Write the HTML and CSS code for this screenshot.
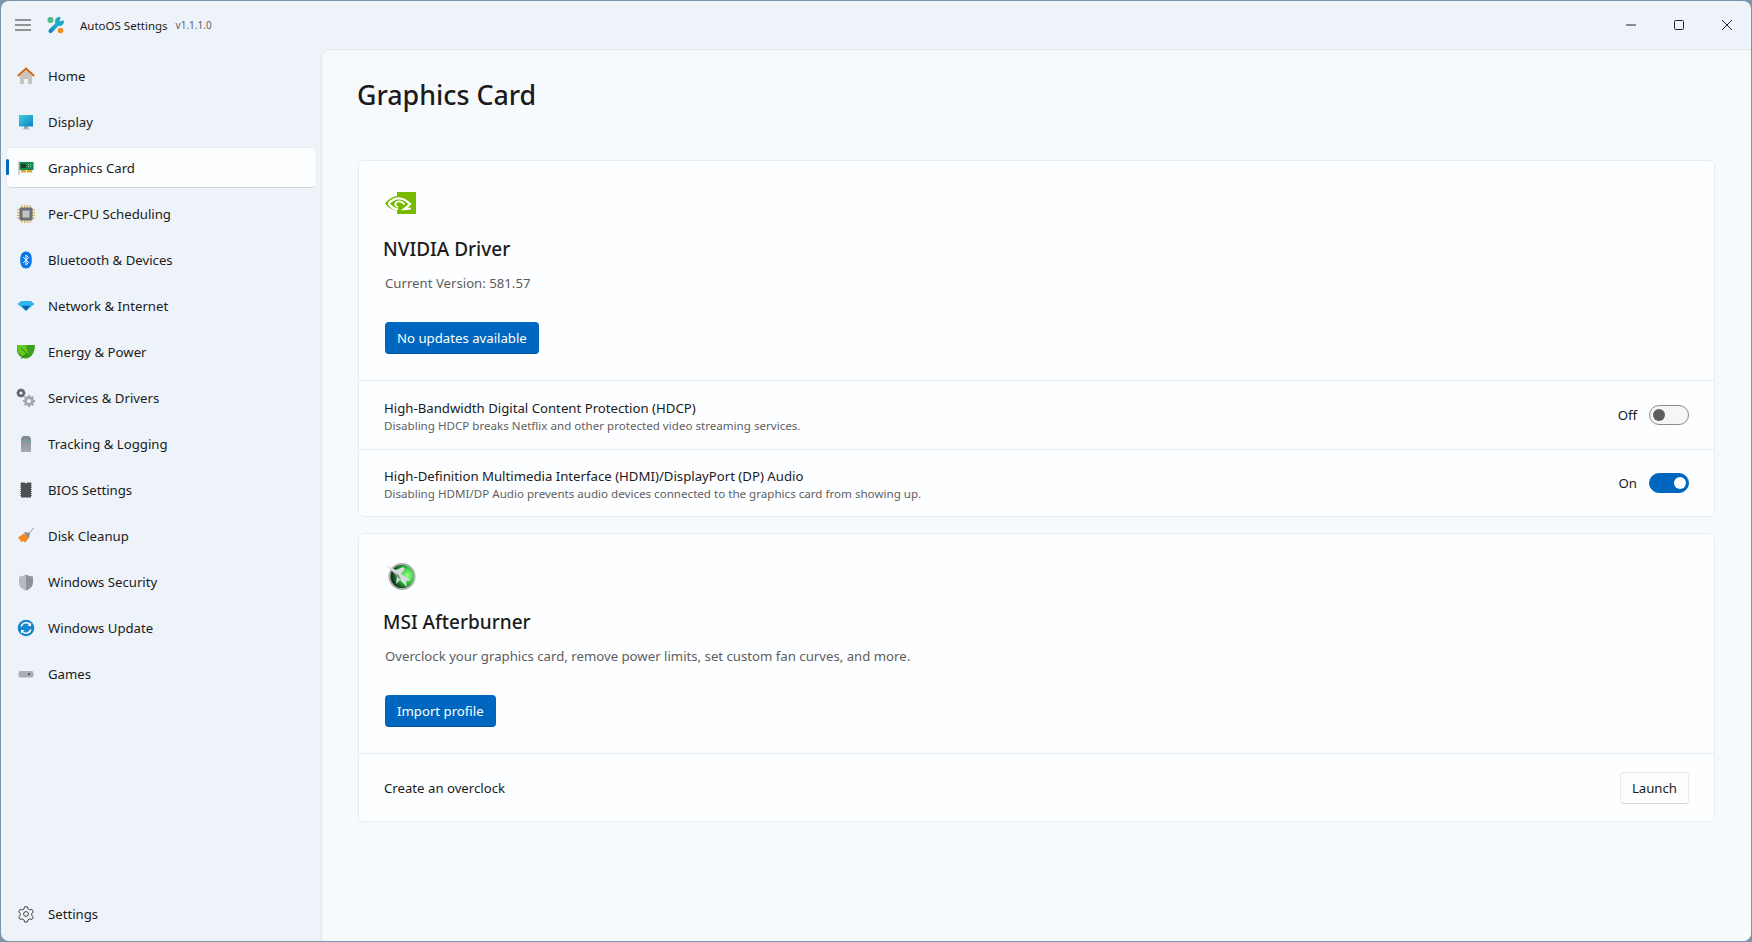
FILE: index.html
```html
<!DOCTYPE html>
<html lang="en">
<head>
    <meta charset="UTF-8">
    <title>AutoOS Settings</title>
    <link rel="stylesheet" href="styles.css">
</head>
<body>
    <div class="window">
        <header class="titlebar">
            <svg class="hamburger" width="16" height="12" viewBox="0 0 16 12"><path d="M0 1h16M0 6h16M0 11h16" stroke="#333" stroke-width="1" fill="none"/></svg>
            <svg class="app-logo" width="18" height="18" viewBox="0 0 18 18">
                <defs><linearGradient id="wrench" x1="0" y1="1" x2="1" y2="0"><stop offset="0" stop-color="#1683c9"/><stop offset="1" stop-color="#27c0c4"/></linearGradient></defs>
                <circle cx="3.500" cy="4" r="3" fill="#4fb98a"/>
                <path d="M3.500 15 11 7.500" stroke="url(#wrench)" stroke-width="4" stroke-linecap="round"/>
                <circle cx="12.500" cy="5.500" r="4.500" fill="#1fa8c6"/>
                <path d="M12.500 5.500 14 0h4v4Z" fill="#eef3f9"/>
                <circle cx="13.500" cy="14.500" r="2.800" fill="#f58a1f"/>
            </svg>
            <span class="app-name">AutoOS Settings</span>
            <span class="app-version">v1.1.1.0</span>
            <div class="caption-buttons">
                <svg width="10" height="10" viewBox="0 0 10 10"><path d="M0 5h10" stroke="#222" stroke-width="1"/></svg>
                <svg width="10" height="10" viewBox="0 0 10 10"><rect x=".5" y=".5" width="9" height="9" rx="1" fill="none" stroke="#222"/></svg>
                <svg width="10" height="10" viewBox="0 0 10 10"><path d="M0 0l10 10M10 0 0 10" stroke="#222" stroke-width="1"/></svg>
            </div>
        </header>
        <div class="main">
            <nav class="sidebar">
                <ul class="nav-list">
                    <li class="nav-item">
                        <svg class="nav-icon" viewBox="0 0 20 20"><path d="M4 9.5 10 4l6 5.500V18h-4v-5H8v5H4Z" fill="#c9c6c2"/><path d="M1.800 10 10 2.500 18.200 10" fill="none" stroke="#d9640f" stroke-width="2"/></svg>
                        Home
                    </li>
                    <li class="nav-item">
                        <svg class="nav-icon" viewBox="0 0 20 20"><defs><linearGradient id="screen" x1="0" y1="0" x2="1" y2="1"><stop offset="0" stop-color="#3fd0e0"/><stop offset="1" stop-color="#0f7fc4"/></linearGradient></defs><rect x="8" y="14" width="4" height="3" fill="#9aa4ad"/><rect x="6.500" y="16.500" width="7" height="1" fill="#b4bcc3"/><rect x="3" y="3" width="14" height="11.500" fill="url(#screen)"/></svg>
                        Display
                    </li>
                    <li class="nav-item selected">
                        <svg class="nav-icon" viewBox="0 0 20 20"><path d="M2.500 3.500h1V17h-1Z" fill="#a5a5a5"/><rect x="3.500" y="4" width="14" height="8" fill="#118a4a"/><rect x="5" y="6" width="5" height="4" fill="#333"/><path d="M12 6h1v1h-1Zm2 0h1v1h-1Zm-2 2h1v1h-1Zm2 0h1v1h-1Z" fill="#9fd8b4"/><rect x="5" y="12" width="5" height="2.500" fill="#e0a81e"/><rect x="11" y="12" width="5" height="2.500" fill="#e0a81e"/></svg>
                        Graphics Card
                    </li>
                    <li class="nav-item">
                        <svg class="nav-icon" viewBox="0 0 20 20"><path d="M6 1v18M8.700 1v18M11.300 1v18M14 1v18M1 6h18M1 8.700h18M1 11.300h18M1 14h18" stroke="#d4a21e" stroke-width="1"/><rect x="3.500" y="3.500" width="13" height="13" rx="1" fill="#6d7074"/><rect x="6.500" y="6.500" width="7" height="7" fill="#c2c3c4"/></svg>
                        Per-CPU Scheduling
                    </li>
                    <li class="nav-item">
                        <svg class="nav-icon" viewBox="0 0 20 20"><path d="M10 1.500c4 0 5.800 3 5.800 8.500S14 18.500 10 18.500 4.200 15.500 4.200 10 6 1.500 10 1.500Z" fill="#0a78ea"/><path d="M7.300 7 12.500 12.500 10 15V5l2.500 2.500L7.300 13" fill="none" stroke="#fff" stroke-width="1"/></svg>
                        Bluetooth &amp; Devices
                    </li>
                    <li class="nav-item">
                        <svg class="nav-icon" viewBox="0 0 20 20"><path d="M5 5h10l3.500 3L10 15 1.500 8Z" fill="#2fb4ee"/><path d="M5.800 9.800h8.400L10 14.800Z" fill="#0b5fb0"/></svg>
                        Network &amp; Internet
                    </li>
                    <li class="nav-item">
                        <svg class="nav-icon" viewBox="0 0 20 20"><path d="M1 3h18c0 7-3 12-8 13.500-5 0-8-2-10-7Z" fill="#3f9f1b"/><path d="M1 3h9l2 8-6 3-4-4Z" fill="#62c91f"/><path d="M5 17l6-5M5 6l6 6" stroke="#1d5c10" stroke-width=".7"/></svg>
                        Energy &amp; Power
                    </li>
                    <li class="nav-item">
                        <svg class="nav-icon services" viewBox="0 0 20 20"><circle cx="5" cy="5" r="2.800" fill="none" stroke="#62666b" stroke-width="2.400"/><path d="M5 .5v2M5 7.500v2M.5 5h2M7.500 5h2M1.800 1.800l1.400 1.400M6.800 6.800l1.400 1.400M8.200 1.800 6.800 3.200M3.200 6.800 1.800 8.200" stroke="#62666b" stroke-width="1.500"/><circle cx="13" cy="13" r="3.600" fill="none" stroke="#a2a7ad" stroke-width="3"/><path d="M13 6.800v2.500M13 16.700v2.500M6.800 13h2.500M16.700 13h2.500M8.600 8.600l1.800 1.800M15.600 15.600l1.800 1.800M17.400 8.600l-1.800 1.800M10.400 15.600l-1.800 1.800" stroke="#a2a7ad" stroke-width="1.800"/></svg>
                        Services &amp; Drivers
                    </li>
                    <li class="nav-item">
                        <svg class="nav-icon" viewBox="0 0 20 20"><defs><linearGradient id="tower" x1="0" y1="0" x2="0" y2="1"><stop offset="0" stop-color="#7f868e"/><stop offset="1" stop-color="#a5abb2"/></linearGradient></defs><path d="M5 4.500 7 2h6l2 2.500V18H5Z" fill="url(#tower)"/><rect x="9" y="5.500" width="2" height="2" fill="#21c3d8"/></svg>
                        Tracking &amp; Logging
                    </li>
                    <li class="nav-item">
                        <svg class="nav-icon" viewBox="0 0 20 20"><path d="M4.500 3v14M15.500 3v14" stroke="#8b8b8b" stroke-width="1" stroke-dasharray="1 1"/><path d="M5 2.500h3.500l1.500 1 1.500-1H15v15H5Z" fill="#4d5054"/></svg>
                        BIOS Settings
                    </li>
                    <li class="nav-item">
                        <svg class="nav-icon" viewBox="0 0 20 20"><path d="M12 8 18 2" stroke="#9a9a9a" stroke-width="1"/><path d="M8 6l6 1-1 5-2 1Z" fill="#8f8f8f"/><path d="M2 11.500 8 7.500l4.500 4.500-3 4.500L7 15l-1.500 1Z" fill="#f5881f"/></svg>
                        Disk Cleanup
                    </li>
                    <li class="nav-item">
                        <svg class="nav-icon" viewBox="0 0 20 20"><path d="M10 2.500c2 1.300 4.500 2 7 2v6c0 4-3 6.500-7 8Z" fill="#8d9298"/><path d="M10 2.500c-2 1.300-4.500 2-7 2v6c0 4 3 6.500 7 8Z" fill="#b7bbc0"/></svg>
                        Windows Security
                    </li>
                    <li class="nav-item">
                        <svg class="nav-icon" viewBox="0 0 20 20"><circle cx="10" cy="10" r="8.300" fill="#1787cf"/><path d="M5.200 8.500A5 5 0 0 1 14 6.800M14.800 11.500A5 5 0 0 1 6 13.200" fill="none" stroke="#fff" stroke-width="1.400"/><path d="M15 4.500v3.500h-3.500ZM5 15.500V12h3.500Z" fill="#fff"/></svg>
                        Windows Update
                    </li>
                    <li class="nav-item">
                        <svg class="nav-icon" viewBox="0 0 20 20"><rect x="2.500" y="7" width="15" height="6.500" rx="2" fill="#a9adb2"/><path d="M12 9.500h2v1.500h-2z" fill="#3c3f44"/></svg>
                        Games
                    </li>
                </ul>
                <div class="nav-item">
                    <svg class="nav-icon" viewBox="0 0 20 20"><circle cx="10" cy="10" r="2.400" fill="none" stroke="#444" stroke-width="1"/><path d="M8.500 2.800h3l.5 2.100 1.700 1 2.100-.6 1.500 2.600-1.500 1.500v2l1.500 1.500-1.500 2.600-2.100-.6-1.700 1-.5 2.100h-3l-.5-2.100-1.700-1-2.100.6-1.500-2.600 1.500-1.500v-2L2.700 7.900l1.500-2.600 2.100.6 1.700-1Z" fill="none" stroke="#444" stroke-width="1" stroke-linejoin="round"/></svg>
                    Settings
                </div>
            </nav>
            <main class="content">
                <h1 class="page-title">Graphics Card</h1>

                <section class="card">
                    <div class="card-top">
                        <svg class="card-logo" width="32" height="23" viewBox="0 0 32 23">
                            <path d="M12 0h19v22H12v-3.500C6 18 2.500 14.500 0 11.500 2.500 8 7 4.500 12 4Z" fill="#76b900"/>
                            <path d="M3.500 11.500C7 8 11 6 15 6.500 19 7 22 9 25 12 23 14 21.500 15.500 19.500 17l6.500-.5" fill="none" stroke="#fff" stroke-width="2.200"/>
                            <path d="M3.500 11.500C6 15 9.500 17 13 17.500" fill="none" stroke="#fff" stroke-width="2.200"/>
                            <path d="M19.500 12.500C17.500 9.500 14 8.500 11.500 10 9.500 11.500 10 14.500 13 15" fill="none" stroke="#fff" stroke-width="1.800"/>
                        </svg>
                        <h2 class="card-title">NVIDIA Driver</h2>
                        <p class="card-text">Current Version: 581.57</p>
                        <button class="btn-primary">No updates available</button>
                    </div>
                    <div class="row row-hdcp">
                        <div class="row-text">
                            <div class="row-title">High-Bandwidth Digital Content Protection (HDCP)</div>
                            <div class="row-desc">Disabling HDCP breaks Netflix and other protected video streaming services.</div>
                        </div>
                        <span class="toggle-label">Off</span>
                        <span class="toggle"></span>
                    </div>
                    <div class="row row-audio">
                        <div class="row-text">
                            <div class="row-title">High-Definition Multimedia Interface (HDMI)/DisplayPort (DP) Audio</div>
                            <div class="row-desc">Disabling HDMI/DP Audio prevents audio devices connected to the graphics card from showing up.</div>
                        </div>
                        <span class="toggle-label">On</span>
                        <span class="toggle on"></span>
                    </div>
                </section>

                <section class="card">
                    <div class="card-top">
                        <svg class="card-logo msi-logo" width="32" height="28" viewBox="0 0 32 28">
                            <defs>
                                <radialGradient id="msi" cx=".72" cy=".45" r=".75"><stop offset="0" stop-color="#9dff88"/><stop offset=".45" stop-color="#22c036"/><stop offset=".8" stop-color="#123d1b"/><stop offset="1" stop-color="#10241a"/></radialGradient>
                            </defs>
                            <circle cx="17" cy="14.500" r="12.500" fill="url(#msi)" stroke="#a9aeaa" stroke-width="2"/>
                            <path d="M1 3 11 8 18 5 20 7 16 12 26 18 21 19 22 25 15 18 11 22 12 14Z" fill="#d7dbdb"/>
                            <path d="M8 10 14 13 16 18 12 15Z" fill="#8c9290"/>
                        </svg>
                        <h2 class="card-title">MSI Afterburner</h2>
                        <p class="card-text">Overclock your graphics card, remove power limits, set custom fan curves, and more.</p>
                        <button class="btn-primary">Import profile</button>
                    </div>
                    <div class="row row-launch">
                        <div class="row-text">
                            <div class="row-title">Create an overclock</div>
                        </div>
                        <button class="btn-secondary">Launch</button>
                    </div>
                </section>
            </main>
        </div>
    </div>
</body>
</html>
```

FILE: styles.css
```css
* {
    box-sizing: border-box;
}
html, body {
    height: 100%;
    margin: 0;
}
body {
    padding: 1px;
    overflow: hidden;
    background: #7d95ac;
    color: #1b1b1b;
    font-family: "Noto Sans", sans-serif;
    font-size: 13.2px;
}
.window {
    display: flex;
    flex-direction: column;
    height: 100%;
    border-radius: 8px;
    overflow: hidden;
    background: #eef3f9;
}

/* title bar */
.titlebar {
    display: flex;
    align-items: center;
    flex: 0 0 48px;
    padding-left: 14px;
}
.hamburger {
    margin-right: 16px;
}
.app-logo {
    margin-right: 15px;
}
.app-name {
    font-size: 11.5px;
    margin-right: 8px;
}
.app-version {
    font-size: 10px;
    color: #5f5f5f;
}
.caption-buttons {
    display: flex;
    gap: 38px;
    margin-left: auto;
    margin-right: 19px;
}

/* sidebar */
.main {
    display: flex;
    flex: 1;
    min-height: 0;
}
.sidebar {
    display: flex;
    flex-direction: column;
    justify-content: space-between;
    flex: 0 0 320px;
    padding: 6px 4px 7px 5px;
}
.nav-list {
    display: flex;
    flex-direction: column;
    gap: 5px;
    list-style: none;
    margin: 0;
    padding: 0;
}
.nav-item {
    position: relative;
    display: flex;
    align-items: center;
    gap: 12px;
    height: 41px;
    padding-left: 9px;
    border: 1px solid transparent;
    border-radius: 5px;
}
.nav-item.selected {
    background: #fcfdfe;
    border-color: #e8ebef;
    border-bottom-color: #cfd4da;
}
.nav-item.selected::before {
    content: "";
    position: absolute;
    left: -1px;
    top: 11px;
    width: 3px;
    height: 16px;
    border-radius: 2px;
    background: #0067c0;
}
.nav-icon {
    width: 20px;
    height: 20px;
    flex: none;
}

/* content */
.content {
    flex: 1;
    padding: 0 36px;
    background: #f7fafd;
    border-top: 1px solid #e3e7ec;
    border-left: 1px solid #e3e7ec;
    border-top-left-radius: 8px;
}
.page-title {
    font-size: 26.8px;
    font-weight: 500;
    line-height: 36px;
    margin: 27px 0 47px -1px;
}
.card {
    background: #fdfeff;
    border: 1px solid #e8ebef;
    border-radius: 6px;
    margin-bottom: 16px;
}
.card-top {
    padding: 31px 26px 26px;
}
.card-logo {
    display: block;
}
.msi-logo {
    margin-top: -3px;
    margin-bottom: -2px;
}
.card-title {
    font-size: 19px;
    font-weight: 500;
    line-height: 26px;
    margin: 21px 0 0 -2px;
}
.card-text {
    line-height: 20px;
    margin: 11px 0 0;
    color: #5d5d5d;
}
.btn-primary {
    display: block;
    height: 32px;
    margin-top: 29px;
    padding: 0 12px;
    border: none;
    border-bottom: 1px solid #00559f;
    border-radius: 4px;
    background: #0067c0;
    color: #fff;
    font: inherit;
}
.btn-secondary {
    height: 32px;
    padding: 0 11px;
    border: 1px solid #e8e9eb;
    border-bottom-color: #d3d5d8;
    border-radius: 4px;
    background: #fdfdfd;
    color: #1b1b1b;
    font: inherit;
}
.row {
    display: flex;
    align-items: center;
    padding: 0 25px 0 25px;
    border-top: 1px solid #e8ebef;
}
.row-hdcp {
    height: 69px;
}
.row-audio {
    height: 67px;
}
.row-launch {
    height: 68px;
}
.row-text {
    flex: 1;
    padding-top: 1px;
}
.row-title {
    line-height: 20px;
}
.row-desc {
    font-size: 11.6px;
    line-height: 16px;
    color: #5f5f5f;
}
.toggle-label {
    margin-right: 12px;
}
.toggle {
    position: relative;
    width: 40px;
    height: 20px;
    border: 1px solid #8a8a8a;
    border-radius: 10px;
    background: #f6f6f6;
}
.toggle::after {
    content: "";
    position: absolute;
    left: 3px;
    top: 3px;
    width: 12px;
    height: 12px;
    border-radius: 50%;
    background: #5d5d5d;
}
.toggle.on {
    border-color: #0067c0;
    background: #0067c0;
}
.toggle.on::after {
    left: 24px;
    background: #fff;
}
```
